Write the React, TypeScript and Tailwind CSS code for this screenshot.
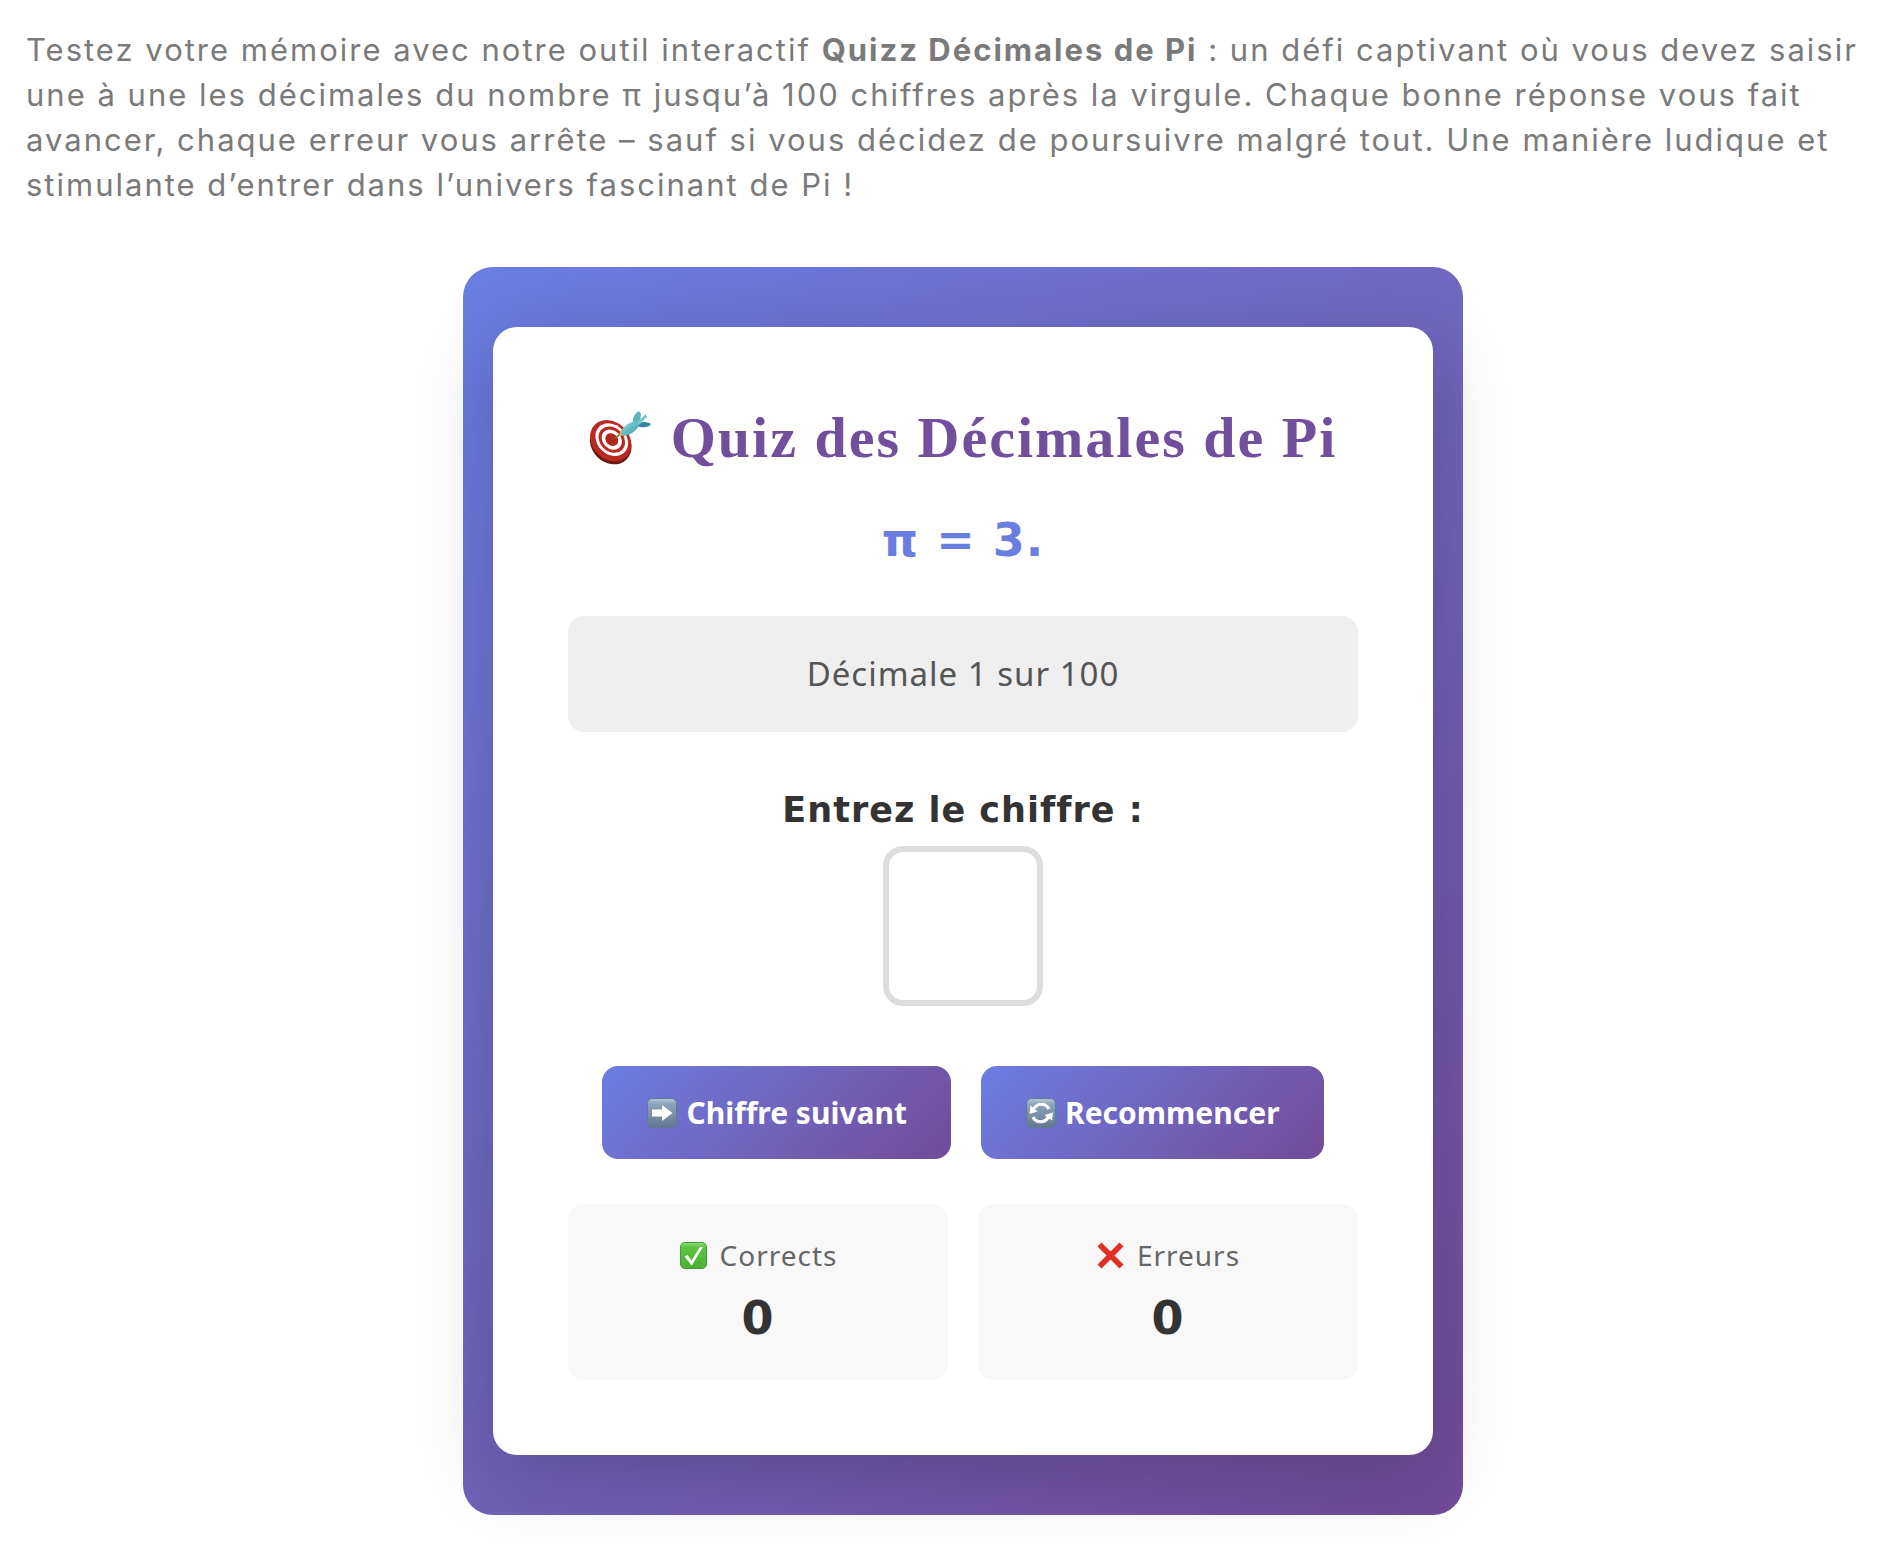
import { useRef, useState } from "react";
import type { FormEvent, ReactNode } from "react";

const PI_DECIMALS =
  "1415926535897932384626433832795028841971693993751058209749445923078164062862089986280348253421170679";

const BUTTON_CLASS =
  "flex h-[93px] cursor-pointer items-center gap-2 rounded-2xl bg-linear-135 from-[#6a7ee2] to-[#714b99] px-11 text-[30px] font-bold tracking-normal text-white";

export default function App() {
  const [entered, setEntered] = useState("");
  const [digit, setDigit] = useState("");
  const [correct, setCorrect] = useState(0);
  const [errors, setErrors] = useState(0);
  const inputRef = useRef<HTMLInputElement>(null);

  const position = Math.min(entered.length + 1, PI_DECIMALS.length);

  function submit(event: FormEvent) {
    event.preventDefault();
    if (digit === "" || entered.length >= PI_DECIMALS.length) return;
    const expected = PI_DECIMALS[entered.length];
    if (digit === expected) {
      setCorrect(correct + 1);
    } else {
      setErrors(errors + 1);
    }
    setEntered(entered + expected);
    setDigit("");
    inputRef.current?.focus();
  }

  function restart() {
    setEntered("");
    setDigit("");
    setCorrect(0);
    setErrors(0);
  }

  return (
    <main className="min-h-screen bg-white pt-[27px] pr-1 pb-7 pl-[26px]">
      <p className="font-['Inter',sans-serif] text-[31px] leading-[45px] tracking-[2px] text-[#7a7a7a]">
        Testez votre mémoire avec notre outil interactif{" "}
        <strong className="font-bold">Quizz Décimales de Pi</strong> : un défi captivant où vous devez saisir
        <br />
        une à une les décimales du nombre π jusqu’à 100 chiffres après la virgule. Chaque bonne réponse vous fait
        <br />
        avancer, chaque erreur vous arrête – sauf si vous décidez de poursuivre malgré tout. Une manière ludique et
        <br />
        stimulante d’entrer dans l’univers fascinant de Pi !
      </p>

      <section className="mx-auto mt-[60px] max-w-[1000px] rounded-[30px] bg-linear-135 from-[#6a7ee2] to-[#714b99] px-[30px] py-[60px] font-['Noto_Sans',sans-serif] tracking-[1px]">
        <div className="rounded-3xl bg-white p-[75px] text-center shadow-[0_20px_80px_rgba(0,0,0,0.2)]">
          <h1 className="flex items-center justify-center gap-5 font-['Liberation_Serif',serif] text-[58px] leading-[72px] font-bold tracking-[2px] whitespace-nowrap text-[#714f9c]">
            <TargetIcon />
            Quiz des Décimales de Pi
          </h1>
          <p className="mt-[34px] mb-11 font-['DejaVu_Sans',sans-serif] text-[46px] leading-[64px] font-bold break-all text-[#6a7ee2]">
            π = 3.{entered}
          </p>

          <div className="flex h-[116px] items-center justify-center rounded-2xl bg-[#efefef] text-[33px] text-[#555]">
            Décimale {position} sur {PI_DECIMALS.length}
          </div>

          <form onSubmit={submit} className="mt-[54px]">
            <label
              htmlFor="digit"
              className="block font-['DejaVu_Sans',sans-serif] text-[35px] leading-[48px] font-bold text-[#333]"
            >
              Entrez le chiffre :
            </label>
            <input
              id="digit"
              ref={inputRef}
              value={digit}
              onChange={(e) => setDigit(e.target.value.replace(/\D/g, ""))}
              maxLength={1}
              inputMode="numeric"
              autoComplete="off"
              className="mx-auto mt-3 block size-40 rounded-[20px] border-6 border-[#ddd] bg-white text-center text-[64px] font-bold text-[#333] outline-none focus:border-[#6a7ee2]"
            />
            <div className="mt-[60px] flex justify-center gap-[30px]">
              <button type="submit" className={BUTTON_CLASS}>
                <NextIcon />
                Chiffre suivant
              </button>
              <button type="button" onClick={restart} className={BUTTON_CLASS}>
                <RestartIcon />
                Recommencer
              </button>
            </div>
          </form>

          <div className="mt-[45px] grid grid-cols-2 gap-[30px]">
            <Stat icon={<CheckIcon />} label="Corrects" value={correct} />
            <Stat icon={<CrossIcon />} label="Erreurs" value={errors} />
          </div>
        </div>
      </section>
    </main>
  );
}

function Stat({ icon, label, value }: { icon: ReactNode; label: string; value: number }) {
  return (
    <div className="rounded-2xl bg-[#f8f8f8] py-[30px]">
      <div className="flex items-center justify-center gap-3 text-[28px] leading-[42px] text-[#666]">
        {icon}
        {label}
      </div>
      <div className="mt-[10px] font-['DejaVu_Sans',sans-serif] text-[46px] leading-[64px] font-bold text-[#333]">
        {value}
      </div>
    </div>
  );
}

function TargetIcon() {
  return (
    <svg width="62" height="54" viewBox="0 0 62 54" aria-hidden="true">
      <defs>
        <linearGradient id="dart" x1="0" y1="0" x2="1" y2="1">
          <stop offset="0" stopColor="#8fe0e6" />
          <stop offset="1" stopColor="#3b97a5" />
        </linearGradient>
      </defs>
      <g transform="rotate(45 21 29)">
        <ellipse cx="24" cy="31" rx="22.5" ry="19" fill="#6b1a13" />
        <ellipse cx="22" cy="29" rx="22.5" ry="18.5" fill="#bb2a22" />
        <ellipse cx="22" cy="27.5" rx="18" ry="14.5" fill="#fff" />
        <ellipse cx="22" cy="27.5" rx="14.5" ry="11.8" fill="#bb2a22" />
        <ellipse cx="22" cy="27.5" rx="11" ry="9" fill="#fff" />
        <ellipse cx="22" cy="27.5" rx="7" ry="5.8" fill="#b0261f" />
      </g>
      <path d="M25 28l8-6" stroke="#7c5b28" strokeWidth="1.5" />
      <path d="M30 25l2-7 5 6z" fill="#e6bd3a" />
      <path d="M44 12c-1-5 2-10 6-12l2 3-1 9z" fill="#5fb2bd" />
      <path d="M47 13c4-2 10-3 15 0-2 4-9 4-15 2z" fill="#388997" />
      <path d="M47 12L57 3l1 3-8 8z" fill="#74c6ce" />
      <path d="M32 22c1-6 7-10 14-12l4 4c-2 6-9 10-16 11z" fill="url(#dart)" />
    </svg>
  );
}

function BlueTile({ children }: { children: ReactNode }) {
  return (
    <svg width="32" height="32" viewBox="0 0 32 32" aria-hidden="true">
      <defs>
        <linearGradient id="tile" x1="0" y1="0" x2="0" y2="1">
          <stop offset="0" stopColor="#b5c9da" />
          <stop offset="0.2" stopColor="#8aa4bc" />
          <stop offset="1" stopColor="#627890" />
        </linearGradient>
      </defs>
      <rect x="1.5" y="1.5" width="29" height="29" rx="5" fill="url(#tile)" stroke="#607b95" />
      {children}
    </svg>
  );
}

function NextIcon() {
  return (
    <BlueTile>
      <path d="M6 12.5h10V8l10.5 8L16 24v-4.5H6z" fill="#fff" />
    </BlueTile>
  );
}

function RestartIcon() {
  return (
    <BlueTile>
      <path d="M8 13c4-8 13-7 16-1M24 19c-4 8-13 7-16 1" fill="none" stroke="#fff" strokeWidth="3.2" />
      <path d="M5.5 8.5L4.5 17l8-2.5zM27 23.5l1-8-8.5 2.5z" fill="#fff" />
    </BlueTile>
  );
}

function CheckIcon() {
  return (
    <svg width="29" height="29" viewBox="0 0 29 29" aria-hidden="true">
      <defs>
        <linearGradient id="green" x1="0" y1="0" x2="0" y2="1">
          <stop offset="0" stopColor="#8bdc7a" />
          <stop offset="0.2" stopColor="#5bc53e" />
          <stop offset="1" stopColor="#4fae32" />
        </linearGradient>
      </defs>
      <rect x="1.5" y="1.5" width="26" height="26" rx="4.5" fill="url(#green)" stroke="#46993a" />
      <path d="M5.5 15.5l3-1.5 4 5.5L21 6h3L12.7 24.5z" fill="#fff" />
    </svg>
  );
}

function CrossIcon() {
  return (
    <svg width="29" height="29" viewBox="0 0 29 29" aria-hidden="true">
      <path d="M3.5 3.5l22 22M25.5 3.5l-22 22" stroke="#df3022" strokeWidth="5.6" />
    </svg>
  );
}
